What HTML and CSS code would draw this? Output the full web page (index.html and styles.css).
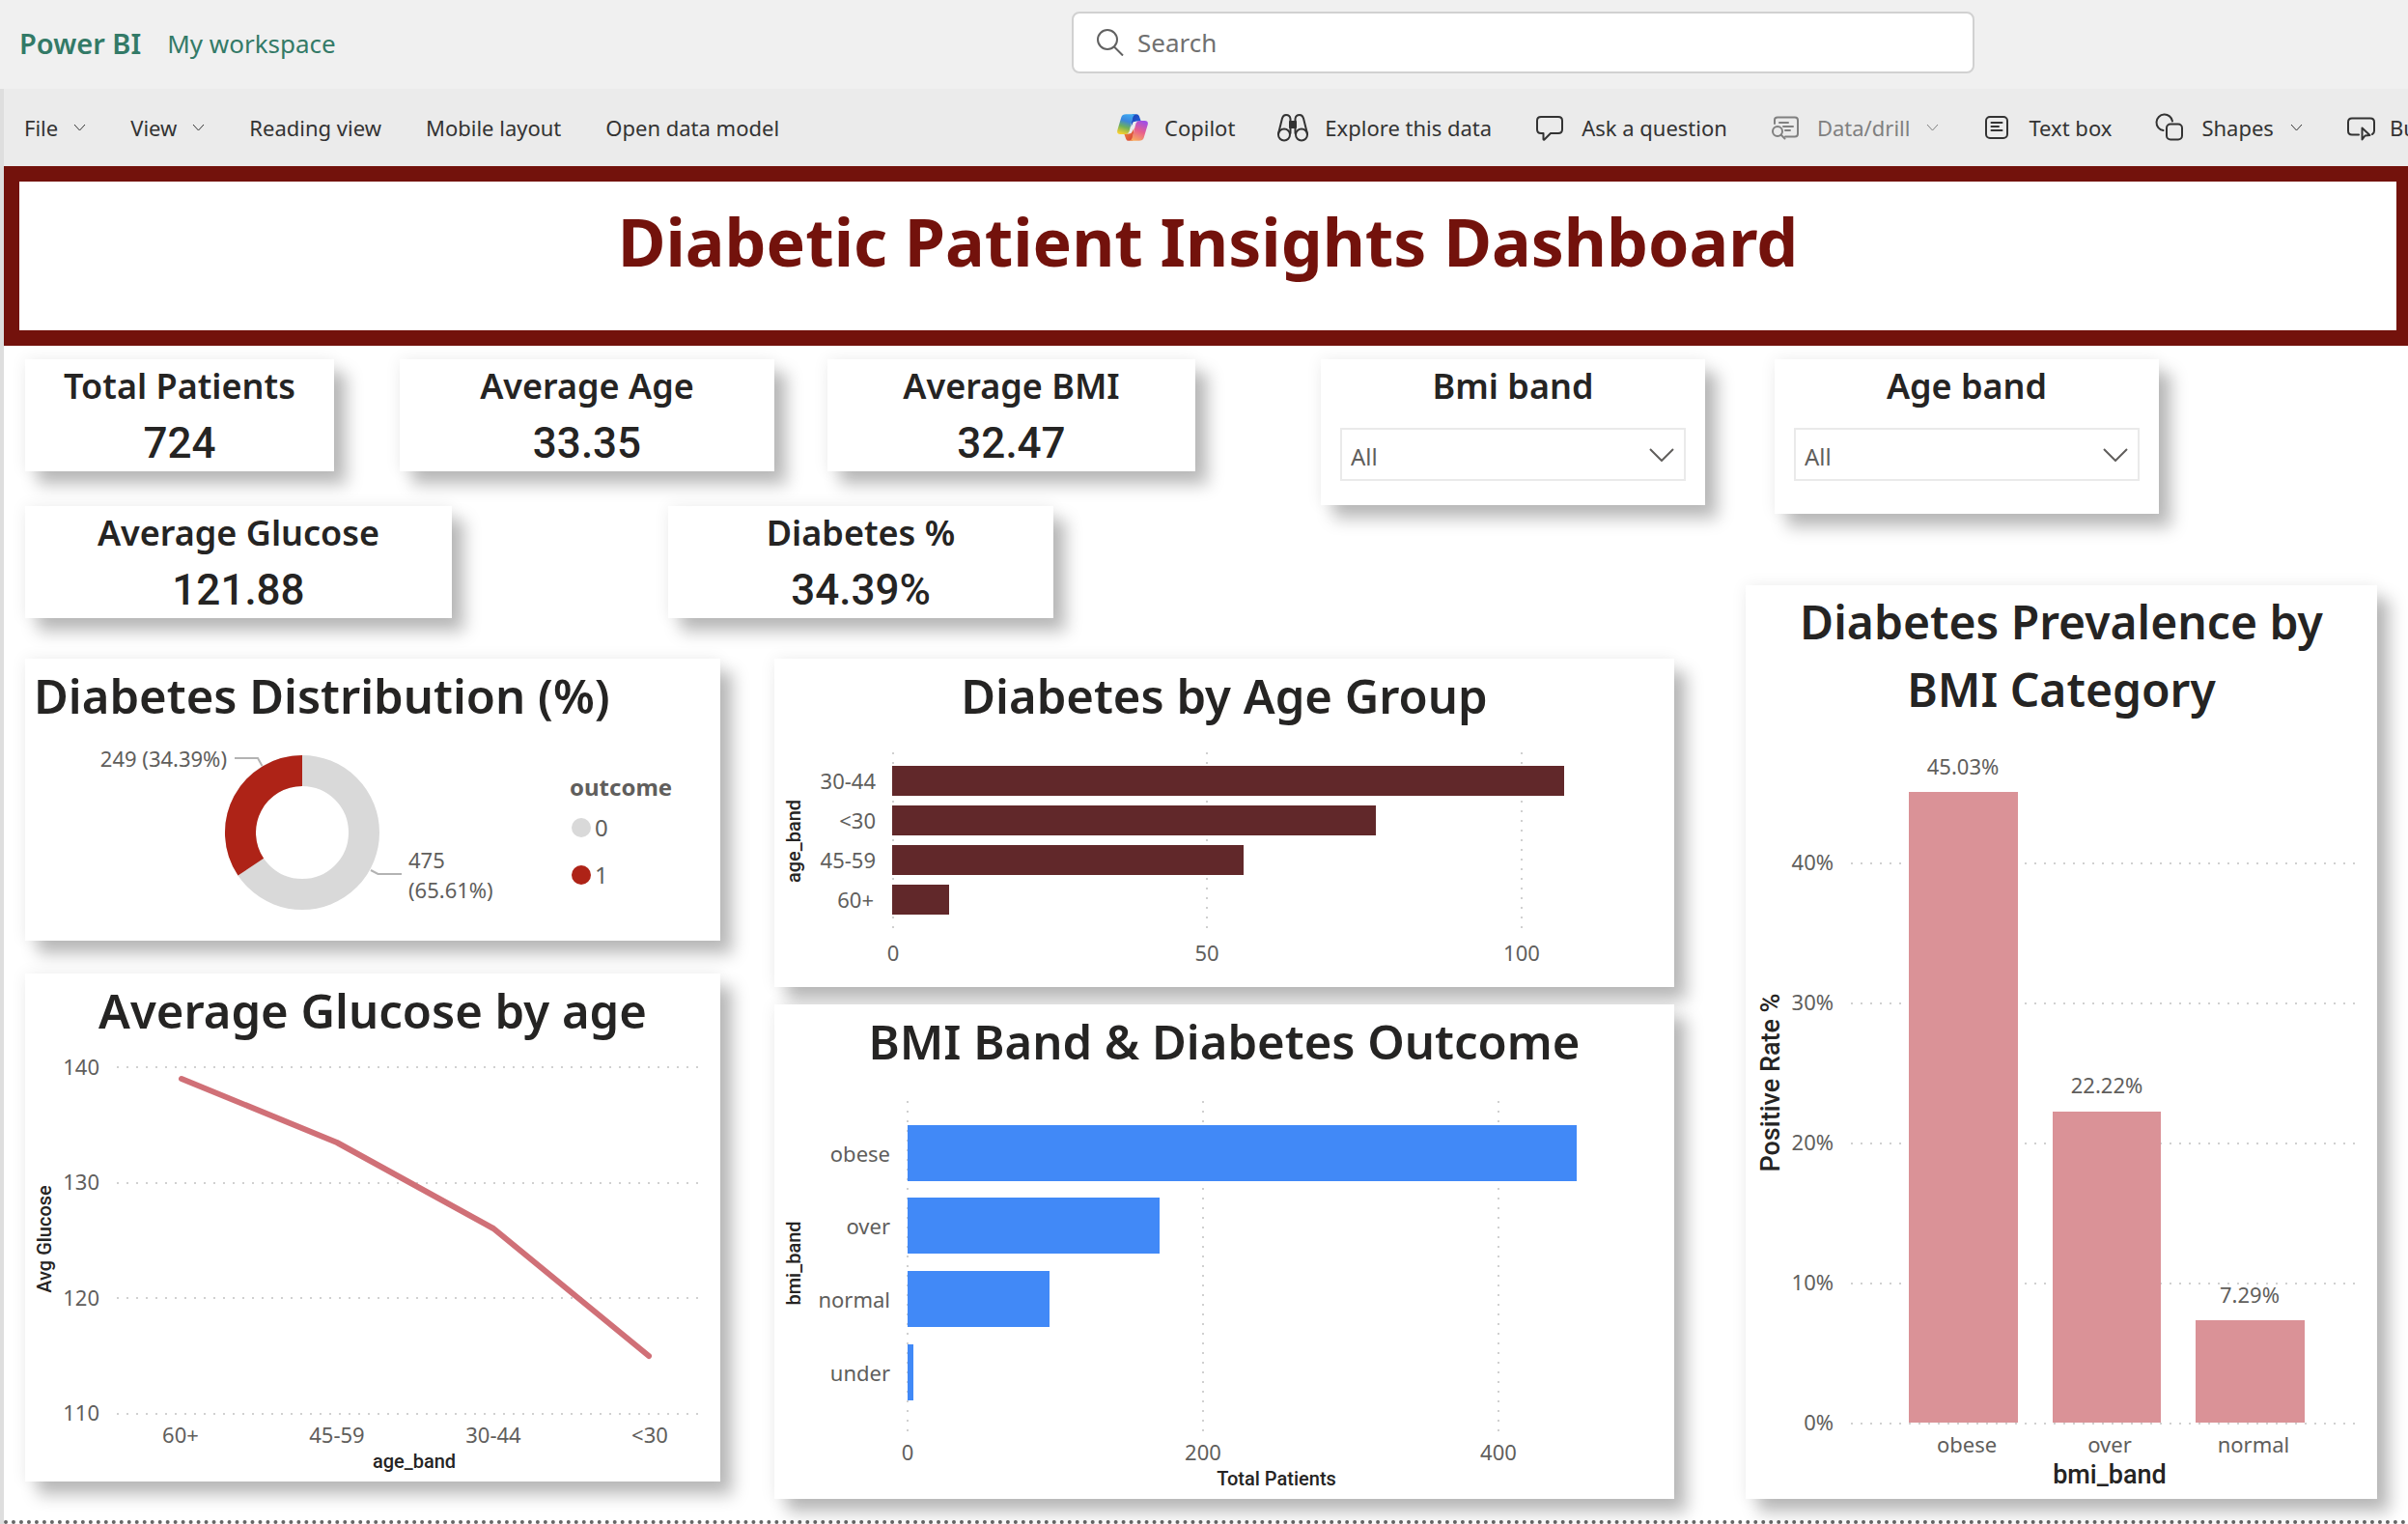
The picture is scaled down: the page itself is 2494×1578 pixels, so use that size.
FILE: index.html
```html
<!DOCTYPE html>
<html lang="en">
<head>
<meta charset="utf-8">
<meta name="viewport" content="width=device-width, initial-scale=1">
<title>Diabetic Patient Insights Dashboard - Power BI</title>
<link rel="stylesheet" href="styles.css">
</head>
<body>
<header class="topbar">
  <div class="crumbs">
    <a class="brand" href="#">Power BI</a>
    <a class="workspace-link" href="#">My workspace</a>
  </div>
  <label class="search">
    <svg class="search-icon" viewBox="0 0 28 28" aria-hidden="true"><circle cx="11" cy="11" r="10"/><path d="M18 18.500L27 27.500"/></svg>
    <input class="search-input" type="search" placeholder="Search" aria-label="Search">
  </label>
</header>

<div class="workspace">
  <nav class="toolbar" aria-label="Report actions">
    <div class="tools">
      <button class="tool" type="button">File<svg class="chev" viewBox="0 0 13 8" aria-hidden="true"><path d="M1 1L6.500 7L12 1"/></svg></button>
      <button class="tool" type="button">View<svg class="chev" viewBox="0 0 13 8" aria-hidden="true"><path d="M1 1L6.500 7L12 1"/></svg></button>
      <button class="tool" type="button">Reading view</button>
      <button class="tool" type="button">Mobile layout</button>
      <button class="tool" type="button">Open data model</button>
    </div>
    <div class="tools tools-insert">
      <button class="tool" type="button">
        <svg class="icon icon-fill" viewBox="0 -6 97 96" aria-hidden="true">
          <defs>
            <linearGradient id="cool" x1="0.600" y1="0" x2="0.300" y2="1"><stop offset="0" stop-color="#3fa9f0"/><stop offset="0.350" stop-color="#3b86dd"/><stop offset="0.650" stop-color="#6fb05a"/><stop offset="1" stop-color="#f6cf2f"/></linearGradient>
            <linearGradient id="warm" x1="0.700" y1="0" x2="0.300" y2="1"><stop offset="0" stop-color="#a04fe6"/><stop offset="0.500" stop-color="#e85f8c"/><stop offset="1" stop-color="#f8ac5c"/></linearGradient>
            <linearGradient id="deep" x1="0" y1="0" x2="1" y2="1"><stop offset="0" stop-color="#1b3fae"/><stop offset="1" stop-color="#2468e8"/></linearGradient>
            <linearGradient id="ember" x1="0" y1="0" x2="1" y2="1"><stop offset="0" stop-color="#f5913c"/><stop offset="1" stop-color="#d23a3a"/></linearGradient>
          </defs>
          <path fill="url(#deep)" d="M48 0H61Q67 0 69 6L75 22H60Q52 22 49 30L44 40Z"/>
          <path fill="url(#ember)" d="M49 84H36Q30 84 28 78L22 62H37Q45 62 48 54L53 44Z"/>
          <path fill="url(#cool)" d="M28 0H60Q52 1 50 9L38 55Q35 63 27 63H10Q-2 63 1 50L13 10Q16 0 28 0Z"/>
          <path fill="url(#warm)" d="M69 84H37Q45 83 47 75L59 29Q62 21 70 21H87Q99 21 96 34L84 74Q81 84 69 84Z"/>
          <path fill="#ebebeb" d="M52 24H60Q53 25 51 32L45 54Q43 61 36 61H33Q40 60 42 53L48 32Q49 26 52 24Z"/>
        </svg>Copilot</button>
      <button class="tool" type="button">
        <svg class="icon" viewBox="0 0 32 32" aria-hidden="true"><circle cx="7" cy="23.500" r="6"/><circle cx="25" cy="23.500" r="6"/><path d="M1 22.500L5 6.500Q6 3 9 3Q13 3 13.500 7V22M31 22.500L27 6.500Q26 3 23 3Q19 3 18.500 7V22"/><path class="solid" d="M13 10H19V16H13Z"/></svg>Explore this data</button>
      <button class="tool" type="button">
        <svg class="icon" viewBox="0 0 32 32" aria-hidden="true"><path d="M7 5H25Q29 5 29 9V18Q29 22 25 22H17L10.500 28.500Q9.500 29 9.500 28V22H7Q3 22 3 18V9Q3 5 7 5Z"/></svg>Ask a question</button>
      <button class="tool" type="button" disabled>
        <svg class="icon" viewBox="0 0 32 32" aria-hidden="true"><path d="M5 12V8Q5 5.500 8 5.500H26Q29 5.500 29 8.500V22.500Q29 25.500 26 25.500H16M10 11H19M14 15H24M16 19H21"/><circle cx="8" cy="20" r="5"/><path d="M11.500 23.500L15.500 27.500"/></svg>Data/drill<svg class="chev" viewBox="0 0 13 8" aria-hidden="true"><path d="M1 1L6.500 7L12 1"/></svg></button>
      <button class="tool" type="button">
        <svg class="icon" viewBox="0 0 32 32" aria-hidden="true"><rect x="5" y="5" width="22" height="22" rx="4"/><path d="M10.500 11H21.500M10.500 15H18M10.500 19H21.500"/></svg>Text box</button>
      <button class="tool" type="button">
        <svg class="icon" viewBox="0 0 32 32" aria-hidden="true"><path d="M9.500 19A8.300 8.300 0 1 1 19 9.500"/><rect x="13" y="12.500" width="16" height="16" rx="4"/></svg>Shapes<svg class="chev" viewBox="0 0 13 8" aria-hidden="true"><path d="M1 1L6.500 7L12 1"/></svg></button>
      <button class="tool tool-tight" type="button">
        <svg class="icon" viewBox="0 0 32 32" aria-hidden="true"><path d="M14 23.500H7Q3 23.500 3 19.500V10.500Q3 6.500 7 6.500H26Q30 6.500 30 10.500V19.500Q30 22 28 23"/><path d="M17.500 16.500V28.500L20.500 24.500L25.500 24Z"/></svg>Buttons</button>
    </div>
  </nav>

  <main>
    <h1 class="banner">Diabetic Patient Insights Dashboard</h1>

    <div class="report">
      <section class="summary">
        <div class="kpis">
          <div class="kpi-row kpi-row-three">
            <div class="card"><h3 class="card-label">Total Patients</h3><p class="value">724</p></div>
            <div class="card"><h3 class="card-label">Average Age</h3><p class="value">33.35</p></div>
            <div class="card"><h3 class="card-label">Average BMI</h3><p class="value">32.47</p></div>
          </div>
          <div class="kpi-row kpi-row-two">
            <div class="card"><h3 class="card-label">Average Glucose</h3><p class="value">121.88</p></div>
            <div class="card"><h3 class="card-label">Diabetes %</h3><p class="value">34.39%</p></div>
          </div>
        </div>
        <div class="slicers">
          <div class="card slicer">
            <label class="card-label" for="bmi">Bmi band</label>
            <div class="picker"><select id="bmi" class="select"><option>All</option></select><svg class="picker-chev" viewBox="0 0 26 14" aria-hidden="true"><path d="M1 1L13 13L25 1"/></svg></div>
          </div>
          <div class="card slicer slicer-tall">
            <label class="card-label" for="age">Age band</label>
            <div class="picker"><select id="age" class="select"><option>All</option></select><svg class="picker-chev" viewBox="0 0 26 14" aria-hidden="true"><path d="M1 1L13 13L25 1"/></svg></div>
          </div>
        </div>
      </section>

      <section class="charts">
        <div class="stack stack-left">
          <article class="card">
            <h2 class="chart-title chart-title-left">Diabetes Distribution (%)</h2>
            <svg class="chart" viewBox="26 758 720 216" role="img" aria-label="Diabetes distribution donut chart">
              <circle cx="313" cy="862" r="64" fill="none" stroke="#d9d9d9" stroke-width="32"/>
              <path fill="#ae2317" d="M313 782A80 80 0 0 0 246.500 906.500L273.100 888.700A48 48 0 0 1 313 814Z"/>
              <path class="leader" d="M243 785H267L271.500 793M384 901L391.500 905H416"/>
              <text class="tick end" x="235" y="794">249 (34.39%)</text>
              <text class="tick" x="423" y="899">475</text>
              <text class="tick" x="423" y="930">(65.61%)</text>
              <text class="legend legend-title" x="590" y="824">outcome</text>
              <circle cx="602" cy="857" r="10" fill="#d9d9d9"/><text class="legend" x="616" y="866">0</text>
              <circle cx="602" cy="906" r="10" fill="#ae2317"/><text class="legend" x="616" y="915">1</text>
            </svg>
          </article>
          <article class="card">
            <h2 class="chart-title">Average Glucose by age</h2>
            <svg class="chart" viewBox="26 1084 720 450" role="img" aria-label="Average glucose by age line chart">
              <path class="grid" d="M121 1105H730M121 1225H730M121 1344H730M121 1464H730"/>
              <path class="line" d="M188 1117L349 1183L511 1272L672 1404"/>
              <text class="tick end" x="103" y="1113">140</text><text class="tick end" x="103" y="1232">130</text><text class="tick end" x="103" y="1352">120</text><text class="tick end" x="103" y="1471">110</text>
              <text class="tick mid" x="187" y="1494">60+</text><text class="tick mid" x="349" y="1494">45-59</text><text class="tick mid" x="511" y="1494">30-44</text><text class="tick mid" x="673" y="1494">&lt;30</text>
              <text class="axis mid" x="429" y="1520">age_band</text>
              <text class="axis mid" transform="translate(53 1283) rotate(-90)">Avg Glucose</text>
            </svg>
          </article>
        </div>

        <div class="stack stack-middle">
          <article class="card">
            <h2 class="chart-title">Diabetes by Age Group</h2>
            <svg class="chart" viewBox="802 758 932 264" role="img" aria-label="Diabetes by age group bar chart">
              <path class="grid" d="M925 779V967M1250 779V967M1576 779V967"/>
              <g fill="#61282a"><rect x="924" y="793" width="696" height="31"/><rect x="924" y="834" width="501" height="31"/><rect x="924" y="875" width="364" height="31"/><rect x="924" y="916" width="59" height="31"/></g>
              <text class="tick end" x="907" y="817">30-44</text><text class="tick end" x="907" y="858">&lt;30</text><text class="tick end" x="907" y="899">45-59</text><text class="tick end" x="905" y="940">60+</text>
              <text class="tick mid" x="925" y="995">0</text><text class="tick mid" x="1250" y="995">50</text><text class="tick mid" x="1576" y="995">100</text>
              <text class="axis mid" transform="translate(829 871) rotate(-90)">age_band</text>
            </svg>
          </article>
          <article class="card">
            <h2 class="chart-title">BMI Band &amp; Diabetes Outcome</h2>
            <svg class="chart" viewBox="802 1116 932 436" role="img" aria-label="Patients by BMI band bar chart">
              <path class="grid" d="M940 1140V1486M1246 1140V1486M1552 1140V1486"/>
              <g fill="#4189f7"><rect x="940" y="1165" width="693" height="58"/><rect x="940" y="1240" width="261" height="58"/><rect x="940" y="1316" width="147" height="58"/><rect x="940" y="1392" width="6" height="58"/></g>
              <text class="tick end" x="922" y="1203">obese</text><text class="tick end" x="922" y="1278">over</text><text class="tick end" x="922" y="1354">normal</text><text class="tick end" x="922" y="1430">under</text>
              <text class="tick mid" x="940" y="1512">0</text><text class="tick mid" x="1246" y="1512">200</text><text class="tick mid" x="1552" y="1512">400</text>
              <text class="axis mid" x="1322" y="1538">Total Patients</text>
              <text class="axis mid" transform="translate(829 1308) rotate(-90)">bmi_band</text>
            </svg>
          </article>
        </div>

        <article class="card prevalence">
          <h2 class="chart-title">Diabetes Prevalence by BMI Category</h2>
          <svg class="chart" viewBox="1808 752 654 800" role="img" aria-label="Diabetes prevalence by BMI category column chart">
            <path class="grid" d="M1917 894H2446M1917 1039H2446M1917 1184H2446M1917 1329H2446M1917 1474H2446"/>
            <g fill="#da9297"><rect x="1977" y="820" width="113" height="653"/><rect x="2126" y="1151" width="112" height="322"/><rect x="2274" y="1367" width="113" height="106"/></g>
            <text class="tick end" x="1899" y="901">40%</text><text class="tick end" x="1899" y="1046">30%</text><text class="tick end" x="1899" y="1191">20%</text><text class="tick end" x="1899" y="1336">10%</text><text class="tick end" x="1899" y="1481">0%</text>
            <text class="tick mid" x="2033" y="802">45.03%</text><text class="tick mid" x="2182" y="1132">22.22%</text><text class="tick mid" x="2330" y="1349">7.29%</text>
            <text class="tick mid" x="2037" y="1504">obese</text><text class="tick mid" x="2185" y="1504">over</text><text class="tick mid" x="2334" y="1504">normal</text>
            <text class="axis axis-large mid" x="2185" y="1536">bmi_band</text>
            <text class="axis axis-large mid" transform="translate(1843 1121) rotate(-90)">Positive Rate %</text>
          </svg>
        </article>
      </section>
    </div>
  </main>
</div>
</body>
</html>
```
FILE: styles.css
```css
* { box-sizing: border-box; }

body {
  margin: 0;
  background: #fff;
  color: #252423;
  font-family: "Noto Sans", "Open Sans", sans-serif;
  overflow-x: hidden;
}

h1, h2, h3, p { margin: 0; }

/* Top bar */
.topbar {
  display: grid;
  grid-template-columns: 1110fr 935fr 449fr;
  align-items: center;
  height: 92px;
  background: #f0f0f0;
}

.crumbs {
  display: flex;
  align-items: center;
  gap: 27px;
  padding: 0 0 2px 20px;
  line-height: 40px;
  white-space: nowrap;
}

.crumbs a { color: #337a67; text-decoration: none; }
.crumbs .brand { font-size: 29px; font-weight: 600; }
.crumbs .workspace-link { font-size: 26px; }

.search {
  display: flex;
  align-items: center;
  gap: 14px;
  height: 64px;
  padding: 0 24px;
  margin-bottom: 4px;
  border: 2px solid #d1d1d1;
  border-radius: 8px;
  background: #fff;
}

.search-icon {
  flex: none;
  width: 28px;
  height: 28px;
  fill: none;
  stroke: #616161;
  stroke-width: 2;
}

.search-input {
  flex: 1;
  min-width: 0;
  padding: 0;
  border: 0;
  outline: 0;
  background: none;
  font: 26px/36px "Noto Sans", sans-serif;
}

.search-input::placeholder { color: #707070; opacity: 1; }

/* Command bar */
.workspace { border-left: 4px solid #dedede; }

.toolbar {
  display: grid;
  grid-template-columns: 1153fr 1337fr;
  align-items: center;
  height: 80px;
  background: #ebebeb;
  overflow: hidden;
}

.tools {
  display: flex;
  align-items: center;
  gap: 46px;
  min-width: 0;
  padding-left: 21px;
}

.tools-insert { gap: 44px; padding-left: 0; }

.tool {
  display: flex;
  flex: none;
  align-items: center;
  gap: 16px;
  padding: 0;
  border: 0;
  background: none;
  color: #333;
  font: 22px/32px "Noto Sans", sans-serif;
  white-space: nowrap;
}

.tools-insert .tool { gap: 17px; }
.tools-insert .tool-tight { gap: 14px; }
.tool:disabled { color: #808080; }

.icon {
  width: 32px;
  height: 32px;
  fill: none;
  stroke: currentColor;
  stroke-width: 2;
  stroke-linecap: round;
  stroke-linejoin: round;
}

.icon-fill { stroke: none; }
.solid { fill: currentColor; }

.chev {
  width: 13px;
  height: 8px;
  fill: none;
  stroke: currentColor;
}

/* Report */
.banner {
  padding: 16px 0 46px;
  border: solid #73120c;
  border-width: 16px 12px 16px 16px;
  color: #73120c;
  font-size: 68px;
  font-weight: 700;
  line-height: 92px;
  text-align: center;
}

.report {
  display: flex;
  flex-direction: column;
  gap: 42px;
  padding: 14px 32px 22px 22px;
  border-bottom: 4px dotted #666;
}

.card {
  background: #fff;
  box-shadow: 13px 14px 16px rgba(0, 0, 0, 0.26), 0 0 16px rgba(0, 0, 0, 0.07);
}

.summary {
  display: grid;
  grid-template-columns: 1212fr 868fr;
  column-gap: 130px;
  padding-right: 226px;
  align-items: start;
}

.kpis { display: grid; gap: 36px; }
.kpi-row { display: grid; }
.kpi-row-three { grid-template-columns: 320fr 68fr 388fr 55fr 381fr; }
.kpi-row-three .card:nth-child(2) { grid-column: 3; }
.kpi-row-three .card:nth-child(3) { grid-column: 5; }
.kpi-row-two { grid-template-columns: 442fr 399fr; column-gap: 224px; padding-right: 147px; }

.card-label {
  display: block;
  font-size: 36px;
  font-weight: 600;
  line-height: 56px;
  text-align: center;
}

.value {
  padding: 3px 0 1px;
  font: 500 44px/56px Roboto, sans-serif;
  text-align: center;
}

.slicers {
  display: grid;
  grid-template-columns: 1fr 1fr;
  gap: 72px;
  align-items: start;
}

.slicer { padding: 0 20px 25px; }
.slicer-tall { padding-bottom: 34px; }
.picker { position: relative; margin-top: 15px; }

.select {
  display: block;
  width: 100%;
  height: 55px;
  padding: 5px 9px 0;
  border: 2px solid #eaeaea;
  border-radius: 0;
  appearance: none;
  background: #fff;
  color: #605e5c;
  font: 24px/36px "Noto Sans", sans-serif;
}

.picker-chev {
  position: absolute;
  top: 21px;
  right: 12px;
  width: 26px;
  height: 14px;
  fill: none;
  stroke: #605e5c;
  stroke-width: 2;
  pointer-events: none;
}

/* Charts */
.charts {
  display: grid;
  grid-template-columns: 720fr 56fr 932fr 74fr 654fr;
  align-items: start;
}

.stack { display: grid; }
.stack-left { gap: 34px; }
.stack-middle { grid-column: 3; gap: 18px; }
.prevalence { grid-column: 5; margin-top: -76px; }

.chart-title {
  padding: 3px 9px;
  font-size: 49px;
  font-weight: 600;
  line-height: 70px;
  text-align: center;
}

.chart-title-left { text-align: left; }
.prevalence .chart-title { font-size: 48px; }
.chart { display: block; width: 100%; height: auto; }

.tick { font-size: 22px; fill: #605e5c; }
.legend { font-size: 24px; fill: #605e5c; }
.legend-title { font-weight: 700; }
.axis { font: 500 20px Roboto, sans-serif; fill: #252423; }
.axis-large { font-size: 27px; }
.end { text-anchor: end; }
.mid { text-anchor: middle; }

.grid {
  fill: none;
  stroke: #d0d0d0;
  stroke-width: 2;
  stroke-dasharray: 2 8;
}

.leader { fill: none; stroke: #b3b3b3; stroke-width: 2; }

.line {
  fill: none;
  stroke: #d07077;
  stroke-width: 6;
  stroke-linecap: round;
  stroke-linejoin: round;
}
```
